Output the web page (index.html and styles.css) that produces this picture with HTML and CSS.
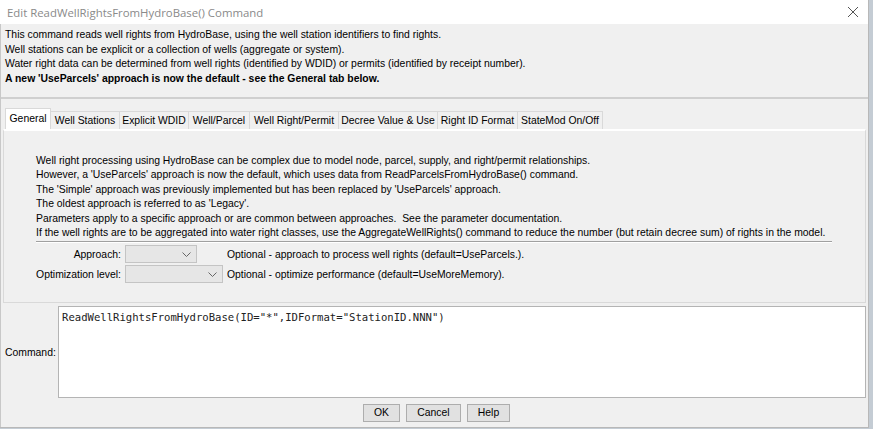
FILE: index.html
```html
<!DOCTYPE html>
<html>
<head>
<meta charset="utf-8">
<link rel="stylesheet" href="styles.css">
</head>
<body>
<div class="window">
  <div class="titlebar">
    <span class="title">Edit ReadWellRightsFromHydroBase() Command</span>
    <svg class="close" width="12" height="12" viewBox="0 0 12 12"><path d="M1 1 L11 11 M11 1 L1 11" stroke="#555" stroke-width="1"/></svg>
  </div>
  <div class="content">
    <div class="desc">
      <div>This command reads well rights from HydroBase, using the well station identifiers to find rights.</div>
      <div>Well stations can be explicit or a collection of wells (aggregate or system).</div>
      <div>Water right data can be determined from well rights (identified by WDID) or permits (identified by receipt number).</div>
      <div class="bold">A new 'UseParcels' approach is now the default - see the General tab below.</div>
    </div>
    <div class="sep"></div>
    <div class="tabs">
      <div class="tab active">General</div>
      <div class="tab">Well Stations</div>
      <div class="tab">Explicit WDID</div>
      <div class="tab">Well/Parcel</div>
      <div class="tab">Well Right/Permit</div>
      <div class="tab">Decree Value &amp; Use</div>
      <div class="tab">Right ID Format</div>
      <div class="tab">StateMod On/Off</div>
    </div>
    <div class="panel">
      <div class="ptext">
        <div>Well right processing using HydroBase can be complex due to model node, parcel, supply, and right/permit relationships.</div>
        <div>However, a 'UseParcels' approach is now the default, which uses data from ReadParcelsFromHydroBase() command.</div>
        <div>The 'Simple' approach was previously implemented but has been replaced by 'UseParcels' approach.</div>
        <div>The oldest approach is referred to as 'Legacy'.</div>
        <div>Parameters apply to a specific approach or are common between approaches.&nbsp; See the parameter documentation.</div>
        <div>If the well rights are to be aggregated into water right classes, use the AggregateWellRights() command to reduce the number (but retain decree sum) of rights in the model.</div>
      </div>
      <div class="psep"></div>
      <div class="form">
        <div class="lbl">Approach:</div>
        <div class="combo c1"><svg width="9" height="5" viewBox="0 0 9 5"><path d="M0.5 0.5 L4.5 4.5 L8.5 0.5" fill="none" stroke="#666" stroke-width="1"/></svg></div>
        <div class="hint">Optional - approach to process well rights (default=UseParcels.).</div>
        <div class="lbl">Optimization level:</div>
        <div class="combo c2"><svg width="9" height="5" viewBox="0 0 9 5"><path d="M0.5 0.5 L4.5 4.5 L8.5 0.5" fill="none" stroke="#666" stroke-width="1"/></svg></div>
        <div class="hint">Optional - optimize performance (default=UseMoreMemory).</div>
      </div>
    </div>
    <div class="cmdrow">
      <div class="cmdlbl">Command:</div>
      <div class="cmdbox">ReadWellRightsFromHydroBase(ID="*",IDFormat="StationID.NNN")</div>
    </div>
    <div class="buttons">
      <div class="btn b-ok">OK</div>
      <div class="btn b-cancel">Cancel</div>
      <div class="btn b-help">Help</div>
    </div>
  </div>
</div>
</body>
</html>
```

FILE: styles.css
```css
html, body {
  margin: 0;
  padding: 0;
}
body {
  background: #c4ccd4;
  width: 873px;
  height: 429px;
  overflow: hidden;
  font-family: "Liberation Sans", Arial, sans-serif;
  font-size: 10.4px;
  color: #000;
}
.window {
  width: 868px;
  height: 427px;
  background: #f0f0f0;
  display: flex;
  flex-direction: column;
  border-right: 1px solid #b8b8b8;
  border-bottom: 1px solid #b8b8b8;
}
.titlebar {
  height: 24px;
  background: #fff;
  display: flex;
  align-items: center;
  justify-content: space-between;
  padding: 0 9px 0 7px;
}
.title {
  font-family: "Open Sans", "Noto Sans", sans-serif;
  font-size: 11.4px;
  color: #8a8a8a;
}
.content {
  flex: 1;
  display: flex;
  flex-direction: column;
  border-left: 1px solid #c8c8c8;
}
.desc {
  padding: 4px 4px 0 4px;
  line-height: 14.5px;
  height: 69px;
  white-space: nowrap;
}
.bold {
  font-weight: bold;
}
.sep {
  height: 0;
  border-top: 2px solid #cfcfcf;
}
.tabs {
  display: flex;
  align-items: flex-end;
  padding-left: 4px;
  margin-top: 9px;
  height: 21px;
}
.tab {
  height: 17px;
  line-height: 17px;
  border: 1px solid #d9d9d9;
  border-bottom: none;
  margin-right: -1px;
  background: #f0f0f0;
  white-space: nowrap;
  text-align: center;
  box-sizing: content-box;
}
.tab.active {
  height: 20px;
  line-height: 19px;
  background: #fff;
}
.tab:nth-child(1) { width: 44px; }
.tab:nth-child(2) { width: 68px; }
.tab:nth-child(3) { width: 68px; }
.tab:nth-child(4) { width: 60px; }
.tab:nth-child(5) { width: 88px; }
.tab:nth-child(6) { width: 98px; }
.tab:nth-child(7) { width: 79px; }
.tab:nth-child(8) { width: 84px; }
.panel {
  margin: 0 2px;
  height: 174px;
  border: 1px solid #d9d9d9;
  border-top: 2px solid #fff;
  box-sizing: border-box;
  display: flex;
  flex-direction: column;
  padding: 23px 0 0 32px;
  white-space: nowrap;
}
.ptext {
  line-height: 14.4px;
}
.psep {
  width: 796px;
  border-top: 1px solid #a0a0a0;
  border-bottom: 1px solid #fff;
  margin-top: 1px;
}
.form {
  display: grid;
  grid-template-columns: 85px auto 1fr;
  column-gap: 4px;
  row-gap: 2px;
  margin-left: 0;
  margin-top: 2px;
  align-items: center;
}
.lbl {
  text-align: right;
}
.combo {
  height: 18px;
  box-sizing: border-box;
  border: 1px solid #c4c4c4;
  background: #e6e6e6;
  display: flex;
  align-items: center;
  justify-content: flex-end;
  padding-right: 5px;
}
.c1 { width: 72px; }
.c2 { width: 98px; }
.cmdrow {
  display: flex;
  align-items: center;
  margin-top: 3px;
  padding-left: 4px;
}
.cmdlbl {
  width: 53px;
}
.cmdbox {
  width: 808px;
  height: 92px;
  box-sizing: border-box;
  border: 1px solid #b4b4b4;
  background: #fff;
  font-family: "DejaVu Sans Mono", monospace;
  font-size: 10.6px;
  padding: 4px 3px;
  color: #222;
}
.buttons {
  display: flex;
  justify-content: center;
  gap: 6px;
  margin-top: 6px;
  padding-left: 4px;
}
.btn {
  height: 18px;
  line-height: 16px;
  box-sizing: border-box;
  border: 1px solid #adadad;
  background: #e1e1e1;
  text-align: center;
}
.b-ok { width: 37px; }
.b-cancel { width: 55px; }
.b-help { width: 43px; }
```
